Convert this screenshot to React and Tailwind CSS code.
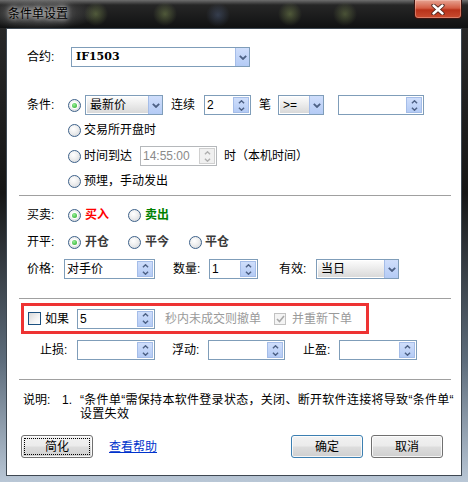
// ─── 条件单设置 dialog (Win7 look) ───────────────────────────────────────────

const FONT = "font-['Liberation_Sans','Noto_Sans_CJK_SC',sans-serif]";
const NUM = "font-['Liberation_Sans',sans-serif]";

// ─── small drawings ───────────────────────────────────────────────────────────

function ChevDown({ color = "#4d6185", w = 8, h = 5 }) {
  return (
    <svg width={w} height={h} viewBox="0 0 8 5">
      <path d="M0.8 0.8 L4 4 L7.2 0.8" fill="none" stroke={color} strokeWidth="1.8" />
    </svg>
  );
}

function ChevUp({ color = "#4d6185", w = 8, h = 5 }) {
  return (
    <svg width={w} height={h} viewBox="0 0 8 5">
      <path d="M0.8 4.2 L4 1 L7.2 4.2" fill="none" stroke={color} strokeWidth="1.8" />
    </svg>
  );
}

function Radio({ checked }) {
  return (
    <span className="w-[13px] h-[13px] shrink-0 rounded-full border border-[#3d6189] bg-[radial-gradient(circle_at_40%_35%,#ffffff,#f0f0f0_40%,#cfd3d8)] flex items-center justify-center">
      {checked && (
        <span className="w-[7px] h-[7px] rounded-full bg-white flex items-center justify-center">
          <span className="w-[5px] h-[5px] rounded-full bg-[radial-gradient(circle_at_40%_35%,#9af09a,#21a621)]" />
        </span>
      )}
    </span>
  );
}

function Check({ disabled, checked }) {
  return (
    <span
      className={`shrink-0 flex items-center justify-center ${
        disabled
          ? "w-[12px] h-[12px] border border-[#c2c2c2] bg-[#f4f4f4]"
          : "w-[13px] h-[13px] border border-[#1c5180] bg-[linear-gradient(135deg,#d8d8d8,#f4f4f4_60%,#ffffff)]"
      }`}
    >
      {checked && (
        <svg width="9" height="8" viewBox="0 0 9 8">
          <path d="M1 4 L3.5 6.5 L8 1" fill="none" stroke="#a8a8a8" strokeWidth="1.6" />
        </svg>
      )}
    </span>
  );
}

// ─── controls ─────────────────────────────────────────────────────────────────

function Combo({ w, children, list }) {
  return (
    <div className={`flex h-[20px] shrink-0 border border-[#7f9db9] bg-white ${w}`}>
      <div
        className={`flex-1 flex items-center pl-[3px] m-px mr-0 ${
          list ? "bg-[linear-gradient(#fbfbfb,#ececec_45%,#d9d9d9)]" : ""
        }`}
      >
        {children}
      </div>
      <div className="w-[14px] flex items-center justify-center bg-[linear-gradient(#cfdefb,#b4cbf5)] border-l border-[#a5bde8]">
        <ChevDown />
      </div>
    </div>
  );
}

function Spin({ w, children, disabled }) {
  return (
    <div
      className={`flex h-[20px] shrink-0 border bg-white ${w} ${
        disabled ? "border-[#b5b8bb] text-[#8a8a8a]" : "border-[#7f9db9]"
      }`}
    >
      <div className={`flex-1 flex items-center pl-[2px] ${NUM}`}>{children}</div>
      <div
        className={`w-[16px] m-px flex flex-col items-center justify-center gap-[3px] border ${
          disabled
            ? "bg-[#f0f0f0] border-[#d0d0d0]"
            : "bg-[linear-gradient(#cfdefb,#b4cbf5)] border-[#a5bde8]"
        }`}
      >
        <ChevUp w={7} h={4} color={disabled ? "#b0b0b0" : "#4d6185"} />
        <ChevDown w={7} h={4} color={disabled ? "#b0b0b0" : "#4d6185"} />
      </div>
    </div>
  );
}

function Btn({ children, primary, focused }) {
  return (
    <button
      className={`relative w-[72px] h-[23px] rounded-[3px] border flex items-center justify-center bg-[linear-gradient(#f2f2f2,#ebebeb_48%,#dddddd_52%,#cfcfcf)] shadow-[inset_0_0_0_1px_rgba(255,255,255,0.8)] ${
        primary ? "border-[#3c7fb1]" : "border-[#707070]"
      }`}
    >
      {focused && <span className="absolute inset-[2px] border border-dotted border-black" />}
      <span className="relative">{children}</span>
    </button>
  );
}

function Sep() {
  return <div className="ml-[12px] w-[432px] h-px bg-[#a0a0a0] shrink-0" />;
}

// ─── title bar ────────────────────────────────────────────────────────────────

function TitleBar() {
  return (
    <div className="h-[28px] shrink-0 flex justify-between bg-[radial-gradient(circle_at_96px_14px,rgba(140,160,90,0.45),transparent_12px),radial-gradient(circle_at_165px_14px,rgba(140,160,90,0.45),transparent_12px),radial-gradient(circle_at_218px_15px,rgba(90,110,150,0.4),transparent_12px),radial-gradient(circle_at_290px_14px,rgba(140,160,90,0.45),transparent_12px),radial-gradient(circle_at_345px_14px,rgba(140,160,90,0.4),transparent_12px),radial-gradient(ellipse_60px_16px_at_38px_14px,rgba(150,150,150,0.55),transparent),linear-gradient(#6e6e6e,#262626_5px,#101112)]">
      <span className="pl-[8px] pt-[7px] text-[12px] leading-[14px] text-black [text-shadow:0_0_5px_#ddd,0_0_9px_#ccc]">
        条件单设置
      </span>
      <div className="mr-[6px] w-[48px] h-[19px] rounded-b-[4px] border border-t-0 border-[#3b1410] bg-[linear-gradient(#e7a493,#d35d44_45%,#b8321a_55%,#c94c30)] shadow-[inset_0_0_0_1px_rgba(255,220,210,0.35)] flex items-center justify-center">
        <svg width="14" height="11" viewBox="0 0 14 11">
          <path d="M2.5 1.5 L11.5 9.5 M11.5 1.5 L2.5 9.5" stroke="#4a2018" strokeWidth="4.2" strokeLinecap="round" />
          <path d="M2.5 1.5 L11.5 9.5 M11.5 1.5 L2.5 9.5" stroke="#ffffff" strokeWidth="2.4" strokeLinecap="round" />
        </svg>
      </div>
    </div>
  );
}

// ─── App ──────────────────────────────────────────────────────────────────────

export default function App() {
  return (
    <div
      className={`w-[468px] h-[482px] flex flex-col overflow-hidden text-[12px] leading-[14px] text-black bg-[linear-gradient(#2b2b2b,#161616_40%,#5e6d7c_75%,#b9c7d6)] ${FONT}`}
    >
      <TitleBar />

      <div className="mx-[6px] h-[448px] shrink-0 border border-[#3e4852] bg-white flex flex-col">
        {/* 合约 */}
        <div className="mt-[18px] h-[20px] flex items-center pl-[20px]">
          <span className="w-[44px]">合约:</span>
          <Combo w="w-[179px]">
            <span className="font-['DejaVu_Serif',serif] font-bold text-[11px]">IF1503</span>
          </Combo>
        </div>

        {/* 条件 */}
        <div className="mt-[28px] h-[20px] flex items-center pl-[20px]">
          <span className="w-[41px]">条件:</span>
          <Radio checked />
          <div className="ml-[4px]">
            <Combo w="w-[78px]" list>最新价</Combo>
          </div>
          <span className="ml-[8px] w-[33px]">连续</span>
          <Spin w="w-[47px]">2</Spin>
          <span className="ml-[8px] w-[19px]">笔</span>
          <Combo w="w-[46px]" list>
            <span className={NUM}>&gt;=</span>
          </Combo>
          <div className="ml-[14px]">
            <Spin w="w-[86px]" />
          </div>
        </div>

        <div className="mt-[2px] h-[26px] flex items-center pl-[61px]">
          <Radio />
          <span className="ml-[3px]">交易所开盘时</span>
        </div>
        <div className="h-[26px] flex items-center pl-[61px]">
          <Radio />
          <span className="ml-[3px] w-[56px]">时间到达</span>
          <Spin w="w-[77px]" disabled>14:55:00</Spin>
          <span className="ml-[7px]">时（本机时间）</span>
        </div>
        <div className="h-[24px] flex items-center pl-[61px]">
          <Radio />
          <span className="ml-[3px]">预埋，手动发出</span>
        </div>

        <div className="mt-[2px]">
          <Sep />
        </div>

        {/* 买卖 */}
        <div className="mt-[9px] h-[20px] flex items-center pl-[20px]">
          <span className="w-[41px]">买卖:</span>
          <Radio checked />
          <span className="ml-[4px] w-[43px] font-bold text-[#ff0000]">买入</span>
          <Radio />
          <span className="ml-[4px] font-bold text-[#008000]">卖出</span>
        </div>

        {/* 开平 */}
        <div className="mt-[7px] h-[20px] flex items-center pl-[20px] ">
          <span className="w-[41px]">开平:</span>
          <Radio checked />
          <span className="ml-[4px] w-[43px] font-bold text-[#3a3a3a]">开仓</span>
          <Radio />
          <span className="ml-[4px] w-[44px] font-bold text-[#3a3a3a]">平今</span>
          <Radio />
          <span className="ml-[3px] font-bold text-[#3a3a3a]">平仓</span>
        </div>

        {/* 价格 */}
        <div className="mt-[7px] h-[20px] flex items-center pl-[20px]">
          <span className="w-[37px]">价格:</span>
          <Spin w="w-[91px]">
            <span className={FONT}>对手价</span>
          </Spin>
          <span className="ml-[18px] w-[36px]">数量:</span>
          <Spin w="w-[49px]">1</Spin>
          <span className="ml-[21px] w-[37px]">有效:</span>
          <Combo w="w-[83px]" list>当日</Combo>
        </div>

        <div className="mt-[19px]">
          <Sep />
        </div>

        {/* 如果 */}
        <div className="mt-[4px] ml-[14px] w-[348px] h-[31px] border-[3px] border-[#ee3333] flex items-center pl-[4px]">
          <Check />
          <span className="ml-[4px] w-[32px]">如果</span>
          <Spin w="w-[78px]">5</Spin>
          <span className="ml-[10px] w-[109px] text-[#9a9a9a]">秒内未成交则撤单</span>
          <Check disabled checked />
          <span className="ml-[6px] text-[#9a9a9a]">并重新下单</span>
        </div>

        {/* 止损 */}
        <div className="mt-[6px] h-[20px] flex items-center pl-[33px]">
          <span className="w-[37px]">止损:</span>
          <Spin w="w-[78px]" />
          <span className="ml-[17px] w-[36px]">浮动:</span>
          <Spin w="w-[77px]" />
          <span className="ml-[18px] w-[36px]">止盈:</span>
          <Spin w="w-[78px]" />
        </div>

        <div className="mt-[19px]">
          <Sep />
        </div>

        {/* 说明 */}
        <div className="mt-[13px] flex pl-[16px]">
          <span className="w-[39px]">说明:</span>
          <span className="w-[18px]">1.</span>
          <span className="whitespace-nowrap tracking-[0.3px]">
            “条件单“需保持本软件登录状态，关闭、断开软件连接将导致“条件单“
            <br />
            设置失效
          </span>
        </div>

        {/* buttons */}
        <div className="mt-[14px] flex items-center pl-[14px] pr-[18px]">
          <Btn focused>简化</Btn>
          <a className="ml-[16px] text-[#0033cc] underline">查看帮助</a>
          <div className="ml-auto flex gap-[8px]">
            <Btn primary>确定</Btn>
            <Btn>取消</Btn>
          </div>
        </div>
      </div>
    </div>
  );
}
